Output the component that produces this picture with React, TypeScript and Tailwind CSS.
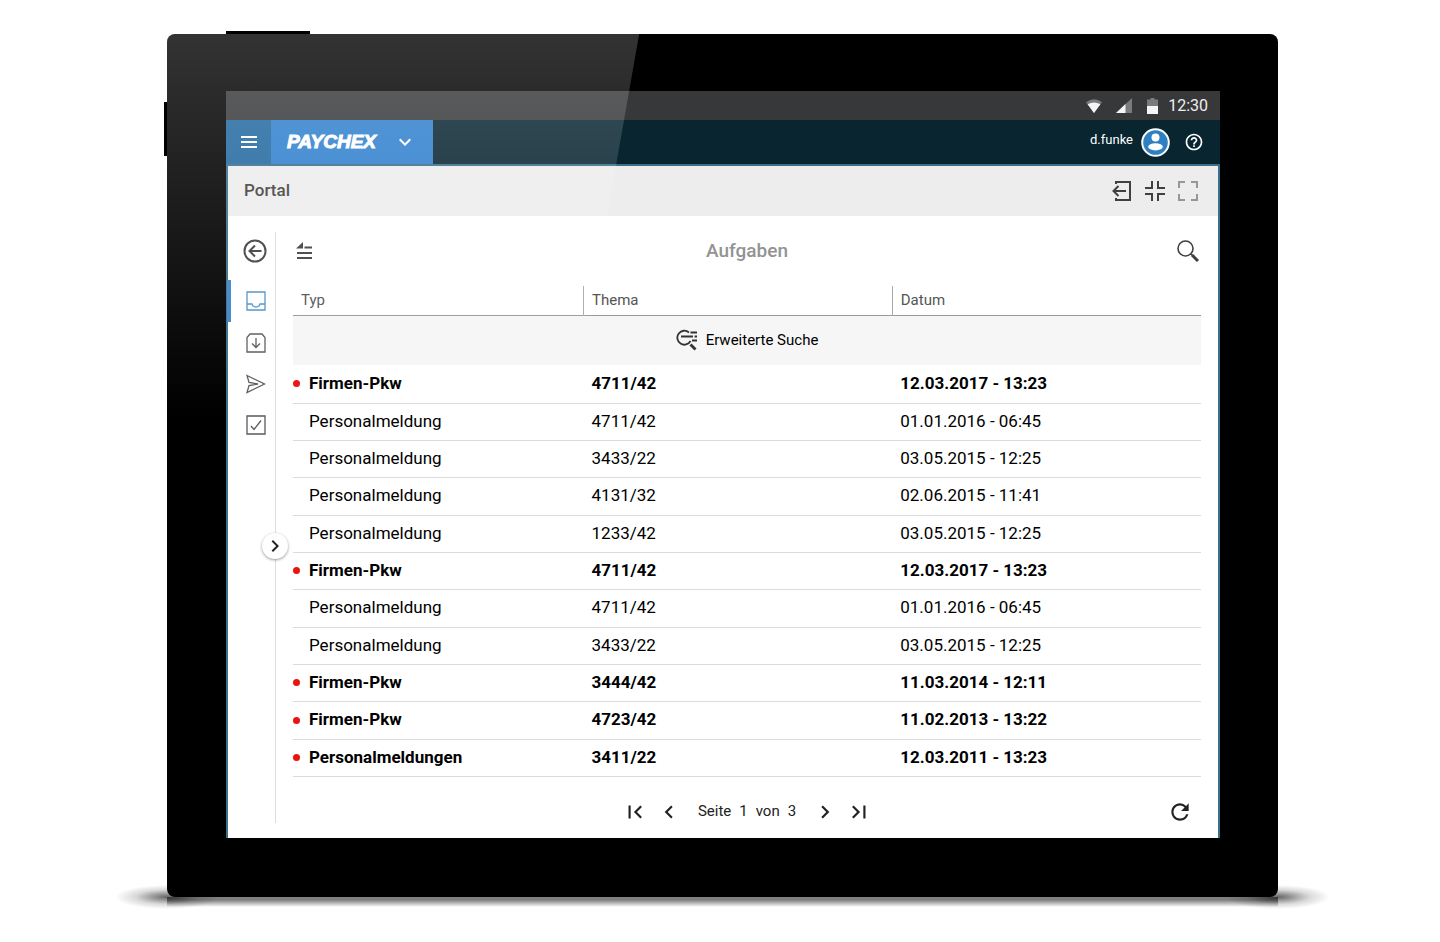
import React from 'react';
import { MdChevronLeft, MdChevronRight, MdFirstPage, MdHelpOutline, MdKeyboardArrowDown, MdLastPage, MdRefresh } from 'react-icons/md';

interface Task {
  typ: string;
  thema: string;
  datum: string;
  unread?: boolean;
}

const TASKS: Task[] = [
  { typ: 'Firmen-Pkw', thema: '4711/42', datum: '12.03.2017 - 13:23', unread: true },
  { typ: 'Personalmeldung', thema: '4711/42', datum: '01.01.2016 - 06:45' },
  { typ: 'Personalmeldung', thema: '3433/22', datum: '03.05.2015 - 12:25' },
  { typ: 'Personalmeldung', thema: '4131/32', datum: '02.06.2015 - 11:41' },
  { typ: 'Personalmeldung', thema: '1233/42', datum: '03.05.2015 - 12:25' },
  { typ: 'Firmen-Pkw', thema: '4711/42', datum: '12.03.2017 - 13:23', unread: true },
  { typ: 'Personalmeldung', thema: '4711/42', datum: '01.01.2016 - 06:45' },
  { typ: 'Personalmeldung', thema: '3433/22', datum: '03.05.2015 - 12:25' },
  { typ: 'Firmen-Pkw', thema: '3444/42', datum: '11.03.2014 - 12:11', unread: true },
  { typ: 'Firmen-Pkw', thema: '4723/42', datum: '11.02.2013 - 13:22', unread: true },
  { typ: 'Personalmeldungen', thema: '3411/22', datum: '12.03.2011 - 13:23', unread: true },
];

interface IconProps {
  size?: number;
  width?: number;
  children: React.ReactNode;
}

const Icon = ({ size = 24, width = 2, children }: IconProps) => (
  <svg width={size} height={size} viewBox={`0 0 ${size} ${size}`} fill="none" stroke="currentColor" strokeWidth={width} className="block">
    {children}
  </svg>
);

const StatusBar = () => (
  <div className="flex h-[29px] items-center justify-end bg-[#37383a] pr-3 text-[16px] text-[#eeeeee]">
    {/* wifi */}
    <svg width="16" height="14" viewBox="0 0 16 14" className="mr-[14px]">
      <path d="M0 3.2Q8-2.6 16 3.2L8 14Z" fill="#7b7b7d" />
      <path d="M1.6 5.2Q8 1.6 14.4 5.2L8 14Z" fill="#f5f5f5" />
    </svg>
    {/* signal */}
    <svg width="16" height="15" viewBox="0 0 16 15" className="mr-[15px]">
      <path d="M0 15 16 0V15Z" fill="#7b7b7d" />
      <path d="M0 15 9.5 6V15Z" fill="#f5f5f5" />
    </svg>
    {/* battery */}
    <svg width="11" height="16" viewBox="0 0 11 16" className="mr-[10px]">
      <path d="M3.5 0h4v1.5H11V8H0V1.5h3.500Z" fill="#7b7b7d" />
      <path d="M0 8h11v8H0Z" fill="#f5f5f5" />
    </svg>
    <span>12:30</span>
  </div>
);

const AppHeader = () => (
  <header className="flex h-[44px] bg-[#082530] text-white">
    <button aria-label="Menü" className="flex w-[45px] items-center justify-center bg-[#2269a0]">
      <Icon size={16} width={2.2}>
        <path d="M0 3h16M0 8h16M0 13h16" />
      </Icon>
    </button>
    <button className="flex w-[162px] items-center justify-between bg-[#2f80cd] pr-4 pl-4">
      <span className="font-['Liberation_Sans',sans-serif] text-[19px] leading-6 font-bold italic [-webkit-text-stroke:1px_white]">PAYCHEX</span>
      <MdKeyboardArrowDown className="h-6 w-6" />
    </button>
    <div className="ml-auto flex items-center pr-4">
      <span className="mr-2 pb-1 text-[13px]">d.funke</span>
      <button aria-label="Profil" className="mr-[14px]">
        <svg width="29" height="29" viewBox="0 0 29 29" className="block">
          <circle cx="14.5" cy="14.500" r="13.300" fill="#2f80c3" stroke="#fff" strokeWidth="2" />
          <circle cx="14.5" cy="9.500" r="4" fill="#fff" />
          <ellipse cx="14.5" cy="18.800" rx="7.300" ry="3.600" fill="#fff" />
        </svg>
      </button>
      <button aria-label="Hilfe">
        <MdHelpOutline className="h-5 w-5" />
      </button>
    </div>
  </header>
);

const TitleBar = () => (
  <div className="flex h-[50px] items-center bg-[#ededed] pr-5 pl-4 text-[#404040]">
    <h1 className="text-[17px] font-medium text-[#404040]">Portal</h1>
    <div className="ml-auto flex gap-[13px]">
      <button aria-label="Abmelden">
        <Icon size={20}>
          <path d="M4 3V1h14v18H4v-2M14 10H1.500M6.500 5 1.500 10 6.500 15" />
        </Icon>
      </button>
      <button aria-label="Verkleinern">
        <Icon size={20}>
          <path d="M7 0v7H0M13 0v7h7M7 20v-7H0M13 20v-7h7" />
        </Icon>
      </button>
      <button aria-label="Vollbild" className="text-[#979797]">
        <Icon size={20}>
          <path d="M1 7V1h6M13 1h6v6M19 13v6h-6M7 19H1v-6" />
        </Icon>
      </button>
    </div>
  </div>
);

const Sidebar = () => (
  <nav className="relative mt-4 mb-[15px] w-12 shrink-0 border-r border-[#dddddd] pt-[7px] text-[#5a5a5a]">
    <button aria-label="Zurück" className="ml-[15px] block text-[#404040]">
      <Icon size={24}>
        <path d="M12 1.500a10.500 10.500 0 1 1 0 21a10.500 10.500 0 0 1 0-21ZM18.500 12H6.500M12 6.500 6.500 12 12 17.500" />
      </Icon>
    </button>
    <div className="mt-[17px] flex flex-col">
      <button aria-label="Eingang" className="-ml-px flex h-[42px] items-center border-l-4 border-[#3d85c6] pl-[15px] text-[#4a90cb]">
        <Icon size={20} width={1.3}>
          <path d="M1 1h18v18H1ZM1 13h5l1 2q3 2 6 0l1-2h5" />
        </Icon>
      </button>
      <button aria-label="Download" className="flex h-[41px] items-center pl-[18px]">
        <Icon size={20} width={1.3}>
          <path d="M4 1h12l3 3.500V19H1V4.500ZM10 5v9M6 10.500l4 4 4-4" />
        </Icon>
      </button>
      <button aria-label="Gesendet" className="flex h-[41px] items-center pl-[18px]">
        <Icon size={20} width={1.3}>
          <path d="M1 1.500 18.500 10 1 18.500 3 11.500 12 10 3 8.500Z" />
        </Icon>
      </button>
      <button aria-label="Erledigt" className="flex h-[42px] items-center pl-[18px]">
        <Icon size={20} width={1.3}>
          <path d="M1 1h18v18H1ZM5 11l3 3.500 7-9" />
        </Icon>
      </button>
    </div>
    <button
      aria-label="Seitenleiste öffnen"
      className="absolute top-[301px] -right-[13px] flex h-[26px] w-[26px] items-center justify-center rounded-full bg-white text-[#222222] shadow-[0_1px_3px_rgba(0,0,0,0.4)]"
    >
      <MdChevronRight className="h-6 w-6" />
    </button>
  </nav>
);

const TaskTable = () => (
  <table className="w-full table-fixed border-collapse text-left text-[17px] text-black">
    <colgroup>
      <col className="w-[32%]" />
      <col className="w-[34%]" />
      <col className="w-[34%]" />
    </colgroup>
    <thead>
      <tr className="h-[29px] border-b border-[#999999] text-[15px] text-[#555555]">
        <th className="p-0 pl-2 font-normal">Typ</th>
        <th className="border-l border-[#aaaaaa] p-0 pl-2 font-normal">Thema</th>
        <th className="border-l border-[#aaaaaa] p-0 pl-2 font-normal">Datum</th>
      </tr>
    </thead>
    <tbody>
      <tr className="h-[50px] bg-[#f6f6f6]">
        <td colSpan={3} className="p-0">
          <button className="mx-auto flex items-center gap-2 text-[15px]">
            <svg width="22" height="22" viewBox="0 0 22 22" fill="none" stroke="#333" strokeWidth="1.800">
              <path d="M13 3.500A7 7 0 1 0 14.500 12M5 7.500h12M18.500 7.500h2.500M14.500 3.500h6.500M16 11.500h5" />
              <path d="m14.500 15.500 5 5" strokeWidth="2.800" />
            </svg>
            Erweiterte Suche
          </button>
        </td>
      </tr>
      {TASKS.map((task, i) => (
        <tr key={i} className={`h-[37px] border-b border-[#dcdcdc] nth-[3n+2]:h-[38px] ${task.unread ? 'font-bold' : ''}`}>
          <td className="p-0">
            <div className="flex items-center gap-[9px]">
              <span className={`h-[7px] w-[7px] rounded-full ${task.unread ? 'bg-[#ee1111]' : ''}`} />
              {task.typ}
            </div>
          </td>
          <td className="p-0 pl-2">{task.thema}</td>
          <td className="p-0 pl-2">{task.datum}</td>
        </tr>
      ))}
    </tbody>
  </table>
);

const Pagination = () => (
  <div className="grid h-6 grid-cols-[1fr_auto_1fr] items-center text-[15px] text-[#222222]">
    <div className="col-start-2 flex items-center">
      <button aria-label="Erste Seite"><MdFirstPage className="h-[26px] w-[26px]" /></button>
      <button aria-label="Vorherige Seite" className="ml-2"><MdChevronLeft className="h-[26px] w-[26px]" /></button>
      <span className="mx-4 flex gap-2">
        <span>Seite</span>
        <span>1</span>
        <span>von</span>
        <span>3</span>
      </span>
      <button aria-label="Nächste Seite" className="mr-2"><MdChevronRight className="h-[26px] w-[26px]" /></button>
      <button aria-label="Letzte Seite"><MdLastPage className="h-[26px] w-[26px]" /></button>
    </div>
    <button aria-label="Aktualisieren" className="mr-2 justify-self-end"><MdRefresh className="h-[26px] w-[26px]" /></button>
  </div>
);

export default function App() {
  return (
    <div className="min-h-screen bg-white pt-[34px] pr-[162px] pb-[45px] pl-[167px] font-[Roboto,sans-serif]">
      {/* Tablet body */}
      <div className="relative isolate">
        {/* Ground shadow: soft tips left and right, thin strip below */}
        <div className="absolute -bottom-3 -left-[52px] -z-20 h-6 w-[104px] bg-[radial-gradient(closest-side,rgba(0,0,0,0.6),rgba(0,0,0,0.15)_60%,transparent)]" />
        <div className="absolute -right-[52px] -bottom-3 -z-20 h-6 w-[104px] bg-[radial-gradient(closest-side,rgba(0,0,0,0.6),rgba(0,0,0,0.15)_60%,transparent)]" />
        <div className="absolute inset-x-0 -bottom-[10px] -z-20 h-[10px] bg-linear-to-b from-black/50 from-30% to-transparent" />
        <div className="absolute -top-[3px] left-[59px] -z-10 h-2 w-[84px] bg-black" />
        <div className="absolute top-[68px] -left-[3px] -z-10 h-[54px] w-2 bg-black" />

        <div className="rounded-lg bg-black pt-[57px] pr-[58px] pb-[59px] pl-[59px]">
          <StatusBar />
          <AppHeader />
          <div className="border-x-2 border-t-2 border-[#3b6f8b] bg-white">
            <TitleBar />
            <div className="flex">
              <Sidebar />
              <main className="min-w-0 flex-1 pr-[17px] pb-[15px] pl-[17px]">
                <div className="grid h-[70px] grid-cols-[1fr_auto_1fr] items-center text-[#404040]">
                  <button aria-label="Liste filtern" className="ml-[3px] justify-self-start">
                    <svg width="17" height="18" viewBox="0 0 17 18" fill="currentColor" className="block">
                      <path d="M0 6.500 7 0V6.500ZM8.500 4.500H16v2H8.500ZM1 10h15v2H1ZM1 15h15v2H1Z" />
                    </svg>
                  </button>
                  <h2 className="text-[19px] font-medium text-[#939393]">Aufgaben</h2>
                  <button aria-label="Suchen" className="mr-0.5 justify-self-end">
                    <Icon size={22} width={1.6}>
                      <circle cx="8.500" cy="8.500" r="7.500" />
                      <path d="m14 14 2 2" />
                      <path d="m15 15 6 6" strokeWidth={3} />
                    </Icon>
                  </button>
                </div>
                <TaskTable />
                <div className="mt-[22px]">
                  <Pagination />
                </div>
              </main>
            </div>
          </div>
        </div>

        {/* Glass reflection */}
        <div className="pointer-events-none absolute top-0 left-0 h-[386px] w-[42.5%] rounded-tl-lg bg-linear-to-b from-white/20 to-transparent [clip-path:polygon(0_0,100%_0,calc(100%-68px)_100%,0_100%)]" />
      </div>
    </div>
  );
}
